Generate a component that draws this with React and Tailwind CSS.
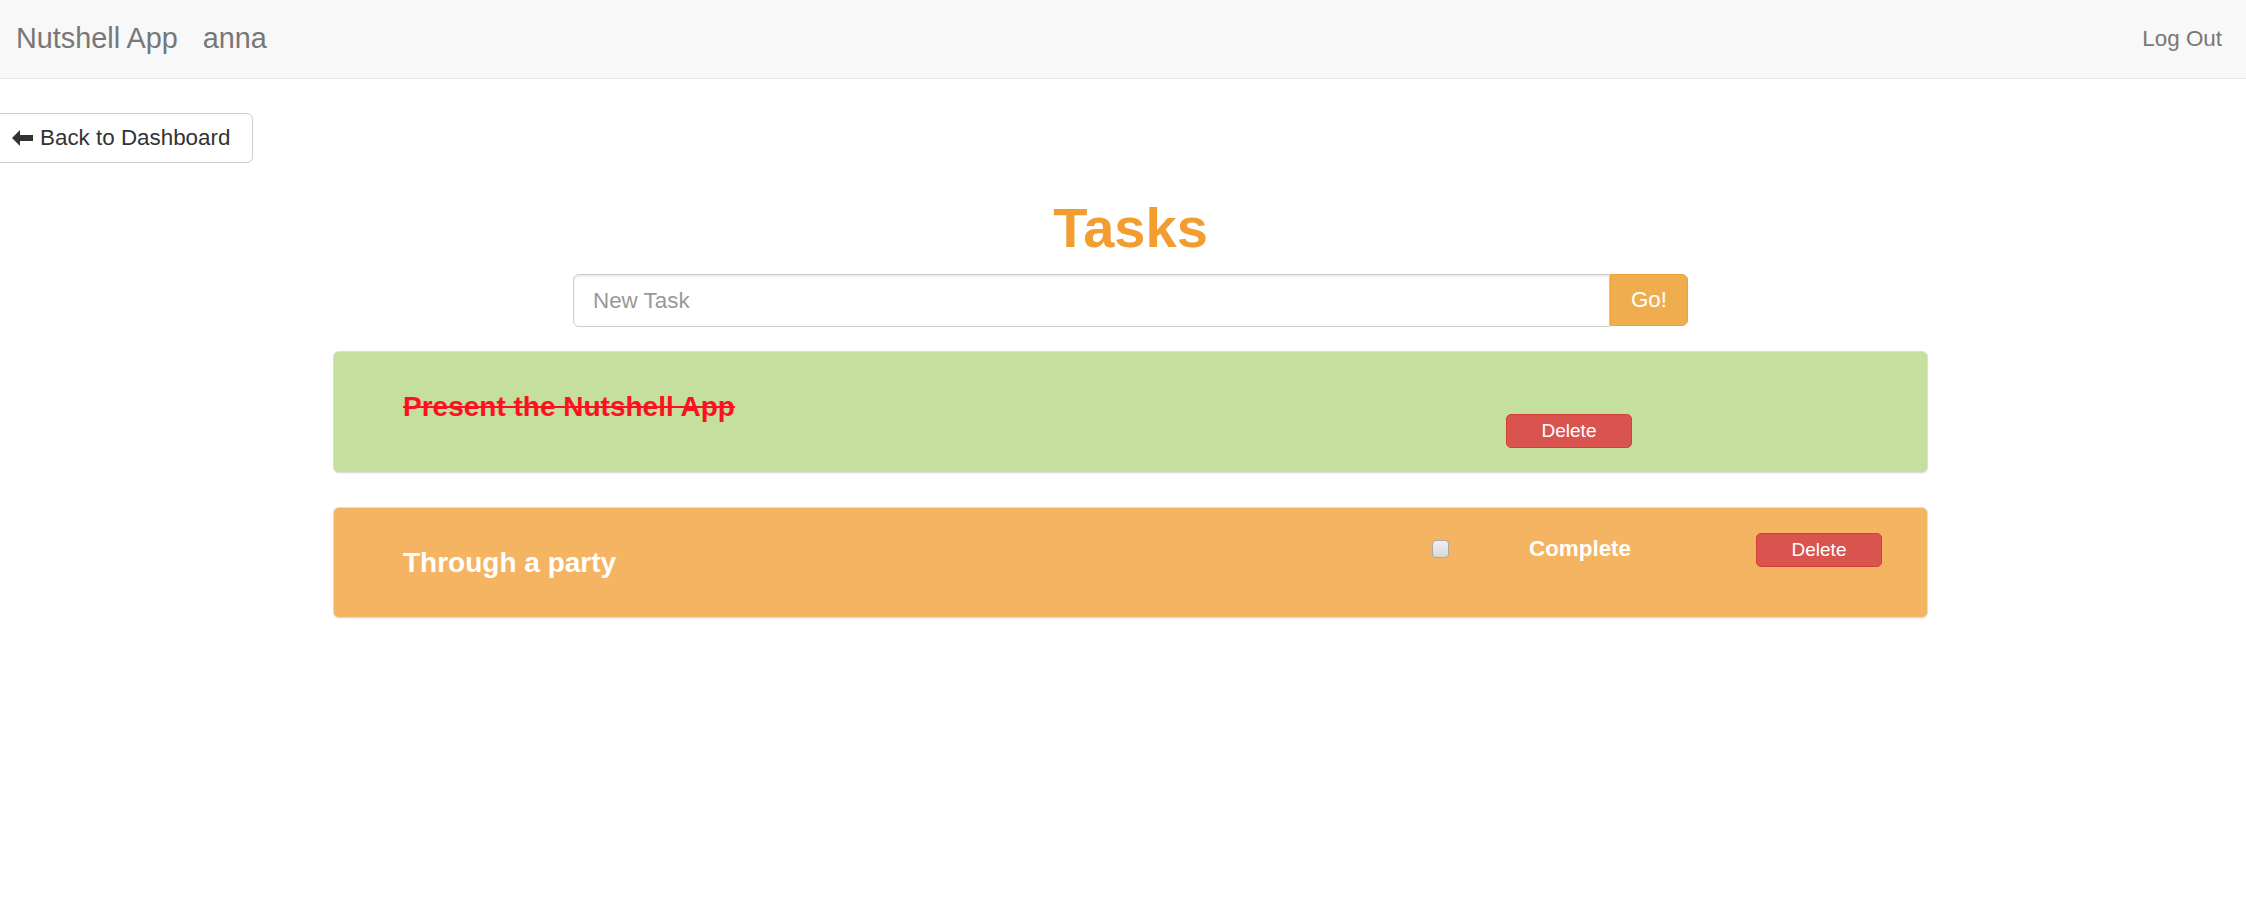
import React, { useState } from 'react';

function ArrowLeft() {
  return (
    <svg width="21" height="16" viewBox="0 0 21 16" className="shrink-0">
      <path d="M0 8 L8 0 L8 5 L21 5 L21 11 L8 11 L8 16 Z" fill="#333333" />
    </svg>
  );
}

function DeleteButton() {
  return (
    <button className="flex h-[34px] w-[126px] items-center justify-center rounded-[5px] border border-[#d43f3a] bg-[#d9534f] text-[19px] text-white">
      Delete
    </button>
  );
}

export default function App() {
  const [task, setTask] = useState('');
  const [done, setDone] = useState(false);

  return (
    <div className="min-h-screen bg-white font-['Liberation_Sans',Arial,sans-serif]">
      {/* navbar */}
      <nav className="flex h-[79px] items-center justify-between border-b border-[#e7e7e7] bg-[#f8f8f8] pl-[16px] pr-[24px] text-[#777777]">
        <div className="flex items-center gap-[25px] text-[28.8px]">
          <span>Nutshell App</span>
          <span>anna</span>
        </div>
        <span className="text-[22.4px]">Log Out</span>
      </nav>

      <div className="mt-[34px]">
        <button className="-ml-[6px] flex h-[50px] w-[259px] items-center gap-[7px] rounded-[6px] border border-[#cccccc] bg-white pl-[17px] text-[22.4px] text-[#333333]">
          <ArrowLeft />
          Back to Dashboard
        </button>
      </div>

      <div className="pl-[15px]">
        <h1 className="mt-[33px] text-center text-[56px] font-bold leading-[64px] text-[#f19d30]">Tasks</h1>

        <div className="mx-auto mt-[14px] flex h-[53px] w-[1115px]">
          <input
            value={task}
            onChange={e => setTask(e.target.value)}
            placeholder="New Task"
            className="h-full flex-1 rounded-l-[6px] border border-[#cccccc] px-[19px] text-[22.4px] text-[#555555] shadow-[inset_0_2px_2px_rgba(0,0,0,0.075)] outline-none placeholder:text-[#999999]"
          />
          <button className="h-[52px] w-[78px] rounded-r-[6px] border border-[#eea236] bg-[#f0ad4e] text-[22.4px] text-white">
            Go!
          </button>
        </div>

        <div className="mx-auto mt-[24px] w-[1595px]">
          {/* completed task */}
          <div className="flex h-[122px] items-start rounded-[6px] border border-[#dddddd] bg-[#c5df9e] pl-[69px] pr-[295px] shadow-[0_1px_1px_rgba(0,0,0,0.05)]">
            <h4 className="mt-[39px] text-[28px] font-bold leading-[32px] text-[#ff1020] line-through">Present the Nutshell App</h4>
            <div className="ml-auto mt-[62px]">
              <DeleteButton />
            </div>
          </div>

          {/* open task */}
          <div className="mt-[34px] flex h-[111px] items-start rounded-[6px] border border-[#dddddd] bg-[#f4b462] pl-[69px] pr-[45px] shadow-[0_1px_1px_rgba(0,0,0,0.05)]">
            <h4 className="mt-[39px] text-[28px] font-bold leading-[32px] text-white">Through a party</h4>
            <input
              type="checkbox"
              checked={done}
              onChange={() => setDone(!done)}
              className="ml-auto mt-[32px] h-[18px] w-[17px] appearance-none rounded-[4px] border border-[#a8a8a8] bg-gradient-to-b from-[#f0f0f0] to-[#d8d8d8]"
            />
            <span className="ml-[80px] mt-[27px] text-[22.4px] font-bold leading-[28px] text-white">Complete</span>
            <div className="ml-[125px] mt-[25px]">
              <DeleteButton />
            </div>
          </div>
        </div>
      </div>
    </div>
  );
}
